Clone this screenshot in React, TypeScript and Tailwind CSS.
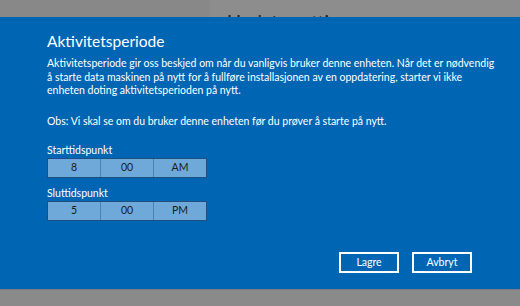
const TimeBox = ({ values }: { values: string[] }) => (
  <div className="flex w-[160px] h-[20px] border border-[#1d4f7f] bg-[#6ea9d9]">
    {values.map((v, i) => (
      <div
        key={v}
        className={`flex-1 flex items-center justify-center text-[10.5px] text-[#1a1a1a] ${
          i > 0 ? "border-l border-[#4a82b4]" : ""
        }`}
      >
        {v}
      </div>
    ))}
  </div>
);

export default function App() {
  return (
    <div className="w-[520px] h-[306px] flex flex-col bg-[#8a8a8a] overflow-hidden font-['Lato',sans-serif]">
      <div className="h-[17px] flex shrink-0">
        <div className="w-[210px] bg-[#888888]" />
        <div className="flex-1 bg-[#8d8d8d] pl-[17px] pt-[11px] overflow-hidden">
          <span className="text-[19px] leading-none text-[#222] whitespace-nowrap">Update settings</span>
        </div>
      </div>
      <div className="h-[273px] bg-[#0066b4] px-[47px] pt-[13px] flex flex-col text-white shrink-0 border-b border-[#7a7a86]">
        <h1 className="text-[15.5px] leading-[22px] whitespace-nowrap">Aktivitetsperiode</h1>
        <p className="mt-[5px] text-[10.5px] leading-[13.5px] whitespace-nowrap">
          Aktivitetsperiode gir oss beskjed om når du vanligvis bruker denne enheten. Når det er nødvendig
          <br />å starte data maskinen på nytt for å fullføre installasjonen av en oppdatering, starter vi ikke
          <br />
          enheten doting aktivitetsperioden på nytt.
        </p>
        <p className="mt-[17px] text-[10.5px] leading-[13.5px] whitespace-nowrap">
          Obs: Vi skal se om du bruker denne enheten før du prøver å starte på nytt.
        </p>
        <div className="mt-[15px] text-[10.5px] leading-[14px]">Starttidspunkt</div>
        <div className="mt-[1px]">
          <TimeBox values={["8", "00", "AM"]} />
        </div>
        <div className="mt-[8px] text-[10.5px] leading-[14px]">Sluttidspunkt</div>
        <div className="mt-[1px]">
          <TimeBox values={["5", "00", "PM"]} />
        </div>
        <div className="mt-auto mb-[16px] flex justify-end gap-[13px] pr-[1px]">
          <button className="w-[60px] h-[21px] border-2 border-white text-[10.5px] text-white leading-none">
            Lagre
          </button>
          <button className="w-[60px] h-[21px] border-2 border-white text-[10.5px] text-white leading-none">
            Avbryt
          </button>
        </div>
      </div>
    </div>
  );
}
